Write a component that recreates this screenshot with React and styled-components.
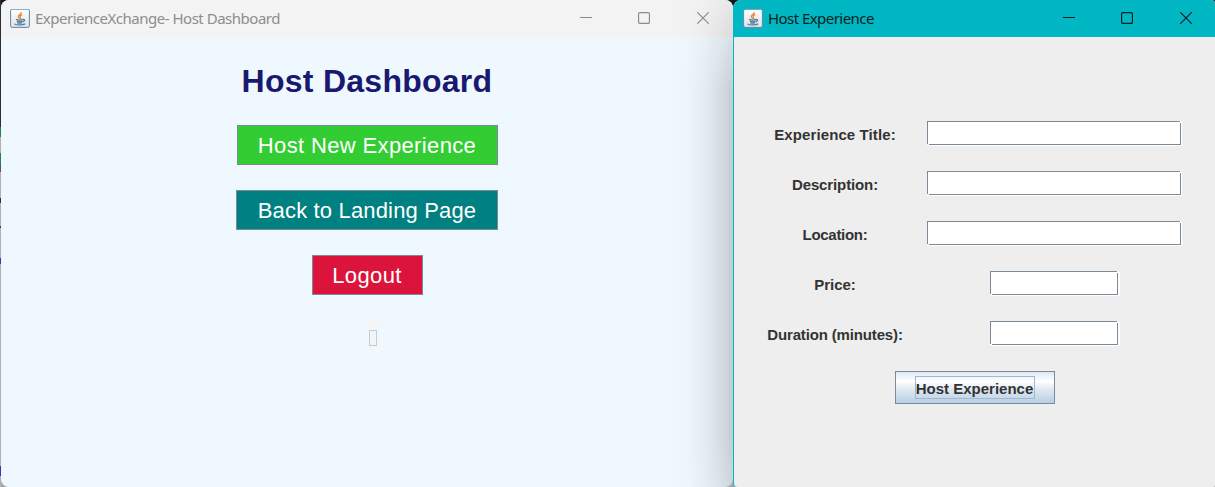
import React from "react";
import styled, { createGlobalStyle } from "styled-components";

const GlobalStyle = createGlobalStyle`
  * { box-sizing: border-box; }
  body { margin: 0; background: #16161a; overflow: hidden; }
`;

const Desktop = styled.div`
  position: relative;
  display: flex;
  width: 1215px;
  height: 487px;
  padding-left: 1px;
  overflow: hidden;
  background: linear-gradient(
      #2c2c3a 0 127px, #2f7d55 127px 137px, #b4b0b0 137px 153px,
      #2f7d55 153px 165px, #55556a 165px 172px, #b4b0b0 172px 198px,
      #303030 198px 203px, #b4b0b0 203px 226px, #444 226px 228px,
      #b4b0b0 228px 258px, #3535c8 258px 264px, #b4b0b0 264px 466px,
      #3535b8 466px 476px, #b4b0b0 476px)
      left / 1px 100% no-repeat,
    linear-gradient(#16161a 0 240px, #a4a8ac 240px);
`;

const Window = styled.section`
  display: flex;
  flex-direction: column;
  flex: none;
  width: ${(p) => p.$width}px;
  height: 487px;
  overflow: hidden;
  border-radius: ${(p) => p.$radius};
  background: ${(p) => p.$background};
`;

const DashboardWindow = styled(Window)`
  position: relative;
  &::after {
    content: "";
    position: absolute;
    inset: 0 0 0 auto;
    width: 64px;
    pointer-events: none;
    background: linear-gradient(90deg, rgba(0, 0, 0, 0), rgba(0, 0, 0, 0.012) 30%, rgba(0, 0, 0, 0.05) 58%, rgba(0, 0, 0, 0.11) 80%, rgba(0, 0, 0, 0.18));
    mask-image: linear-gradient(rgba(0, 0, 0, 0.25), #000 90px, #000 440px, rgba(0, 0, 0, 0.8));
  }
`;

const HostWindow = styled(Window)`
  border-left: 1px solid #00b7c3;
`;

const TitleBar = styled.header`
  display: flex;
  align-items: center;
  flex: none;
  height: 37px;
  padding-left: 9px;
  color: ${(p) => p.$color};
  background: ${(p) => p.$background};
`;

const WindowTitle = styled.span`
  margin-left: 5px;
  padding-bottom: 2px;
  font: 15px/20px "Noto Sans", sans-serif;
  letter-spacing: ${(p) => p.$spacing}px;
  white-space: nowrap;
`;

const Controls = styled.div`
  display: flex;
  margin-left: auto;
  margin-right: ${(p) => p.$end}px;
  padding-bottom: 1px;
  gap: 46px;
`;

const Glyph = styled.svg`
  display: block;
  width: 12px;
  height: 12px;
  fill: none;
  stroke: currentColor;
  stroke-width: 1.15;
  &:last-child { margin-left: 1px; }
`;

const DashboardBody = styled.main`
  display: flex;
  flex-direction: column;
  align-items: center;
  padding-top: 26px;
`;

const Heading = styled.h1`
  margin: 0 0 25px;
  font: bold 32px/37px "Liberation Sans", Arial, sans-serif;
  letter-spacing: 0.26px;
  color: #191970;
`;

const ActionButton = styled.button`
  width: ${(p) => p.$width}px;
  height: 40px;
  margin: 0 0 25px;
  padding: 2px 0 0;
  border: 1px solid #7a8a99;
  background: ${(p) => p.$background};
  color: #fff;
  font: 22px/36px "Liberation Sans", Arial, sans-serif;
  letter-spacing: ${(p) => p.$spacing}px;
  white-space: nowrap;
`;

const EmptyArea = styled.div`
  display: flex;
  align-items: flex-end;
  justify-content: center;
  width: 12px;
  height: 29px;
  margin-left: 12px;
  padding-bottom: 3px;
  background: #f5f5f5;
`;

const MissingGlyph = styled.span`
  width: 8px;
  height: 16px;
  border: 1px solid #b8cfe5;
`;

const Form = styled.form`
  display: flex;
  flex-direction: column;
  align-items: center;
  padding-top: 84px;
`;

const Row = styled.div`
  display: grid;
  grid-template-columns: 136px 254px;
  column-gap: 24px;
  width: 414px;
  height: 25px;
  margin: 0 1px 25px 0;
`;

const Label = styled.label`
  justify-self: center;
  padding-top: 5px;
  color: #333;
  font: bold 15px/18px "Liberation Sans", Arial, sans-serif;
  letter-spacing: ${(p) => p.$spacing}px;
  white-space: nowrap;
`;

/* Each edge stops short of the top-right and bottom-left corners. */
const edge = "linear-gradient(#7a8a99, #7a8a99)";
const Field = styled.input`
  justify-self: center;
  width: ${(p) => p.$width}px;
  height: 24px;
  padding: 0 4px;
  border: 0;
  border-radius: 0;
  outline: 0;
  background:
    ${edge} left top / calc(100% - 1px) 1px no-repeat,
    ${edge} left top / 1px calc(100% - 1px) no-repeat,
    ${edge} right bottom / 1px calc(100% - 2px) no-repeat,
    ${edge} right bottom / calc(100% - 2px) 1px no-repeat,
    #fff;
  box-shadow: ${(p) => p.$highlight}px 1px 0 #fff;
`;

const SubmitButton = styled.button`
  display: flex;
  align-items: center;
  justify-content: center;
  width: 160px;
  height: 33px;
  padding: 0;
  border: 1px solid #7a8a99;
  background: linear-gradient(#dde8f3 0%, #fff 30%, #dbe6f1 60%, #b8cfe5 100%);
`;

const FocusedText = styled.span`
  width: 120px;
  height: 23px;
  border: 1px solid #a3b8cc;
  color: #333;
  font: bold 15px/23px "Liberation Sans", Arial, sans-serif;
  white-space: nowrap;
  display: flex;
  justify-content: center;
`;

function JavaIcon() {
  return (
    <svg width="20" height="20" viewBox="0 0 20 20" fill="none">
      <defs>
        <linearGradient id="tile" x2="0" y2="1">
          <stop stopColor="#fff" />
          <stop offset="1" stopColor="#dce3e9" />
        </linearGradient>
      </defs>
      <rect x=".6" y=".2" width="18.8" height="18.2" rx="1.6" fill="url(#tile)" stroke="#6189a8" />
      <path d="M11.3 3.2c.4 2-3.7 2.7-3 4.6.2.8 1 1.2 1.3 2.1M12.2 5.6c-2 .9-2.8 1.7-1.8 2.8.4.5.2 1-.1 1.4" stroke="#ee8434" strokeWidth="1.3" />
      <path d="M6 10.4c1.6.7 5.4.7 7 0M6.7 12c1.7.7 4.3.7 6 0M7.2 13.6c1.5.6 3.6.6 5 0M13 10.6c2.2-.6 2.2 1.7-.2 2.2M4.4 15c2.3 1.3 8.3 1.3 10.8-.1" stroke="#557f9e" strokeWidth="1.3" />
    </svg>
  );
}

function WindowControls({ end }) {
  return (
    <Controls $end={end}>
      <Glyph viewBox="0 0 12 12"><path d="M0 5.5H12" /></Glyph>
      <Glyph viewBox="0 0 12 12"><rect x=".6" y=".6" width="10.8" height="10.8" rx="1" /></Glyph>
      <Glyph viewBox="0 0 12 12"><path d="M.3.3 11.7 11.7M11.7.3.3 11.7" /></Glyph>
    </Controls>
  );
}

const fields = [
  { label: "Experience Title:", width: 254, spacing: 0.1, highlight: 1 },
  { label: "Description:", width: 254, spacing: -0.12, highlight: 1 },
  { label: "Location:", width: 254, spacing: -0.3, highlight: 1 },
  { label: "Price:", width: 128, spacing: -0.05, highlight: 2 },
  { label: "Duration (minutes):", width: 128, spacing: -0.15, highlight: 2 },
];

export default function App() {
  return (
    <>
      <GlobalStyle />
      <Desktop>
        <DashboardWindow $width={732} $radius="8px" $background="#f0f8ff">
          <TitleBar $color="#8d8d8d" $background="#f3f3f3">
            <JavaIcon />
            <WindowTitle $spacing={-0.49}>ExperienceXchange- Host Dashboard</WindowTitle>
            <WindowControls end={24} />
          </TitleBar>
          <DashboardBody>
            <Heading>Host Dashboard</Heading>
            <ActionButton $width={261} $spacing={0.36} $background="#32cd32">Host New Experience</ActionButton>
            <ActionButton $width={262} $spacing={0.16} $background="#008080">Back to Landing Page</ActionButton>
            <ActionButton $width={111} $spacing={0.36} $background="#dc143c">Logout</ActionButton>
            <EmptyArea><MissingGlyph /></EmptyArea>
          </DashboardBody>
        </DashboardWindow>
        <HostWindow $width={482} $radius="8px 4px 2px 4px" $background="#eee">
          <TitleBar $color="#071e20" $background="#00b7c3">
            <JavaIcon />
            <WindowTitle $spacing={-0.55}>Host Experience</WindowTitle>
            <WindowControls end={23} />
          </TitleBar>
          <Form>
            {fields.map((f) => (
              <Row key={f.label}>
                <Label $spacing={f.spacing}>{f.label}</Label>
                <Field $width={f.width} $highlight={f.highlight} aria-label={f.label} />
              </Row>
            ))}
            <SubmitButton type="button"><FocusedText>Host Experience</FocusedText></SubmitButton>
          </Form>
        </HostWindow>
      </Desktop>
    </>
  );
}
